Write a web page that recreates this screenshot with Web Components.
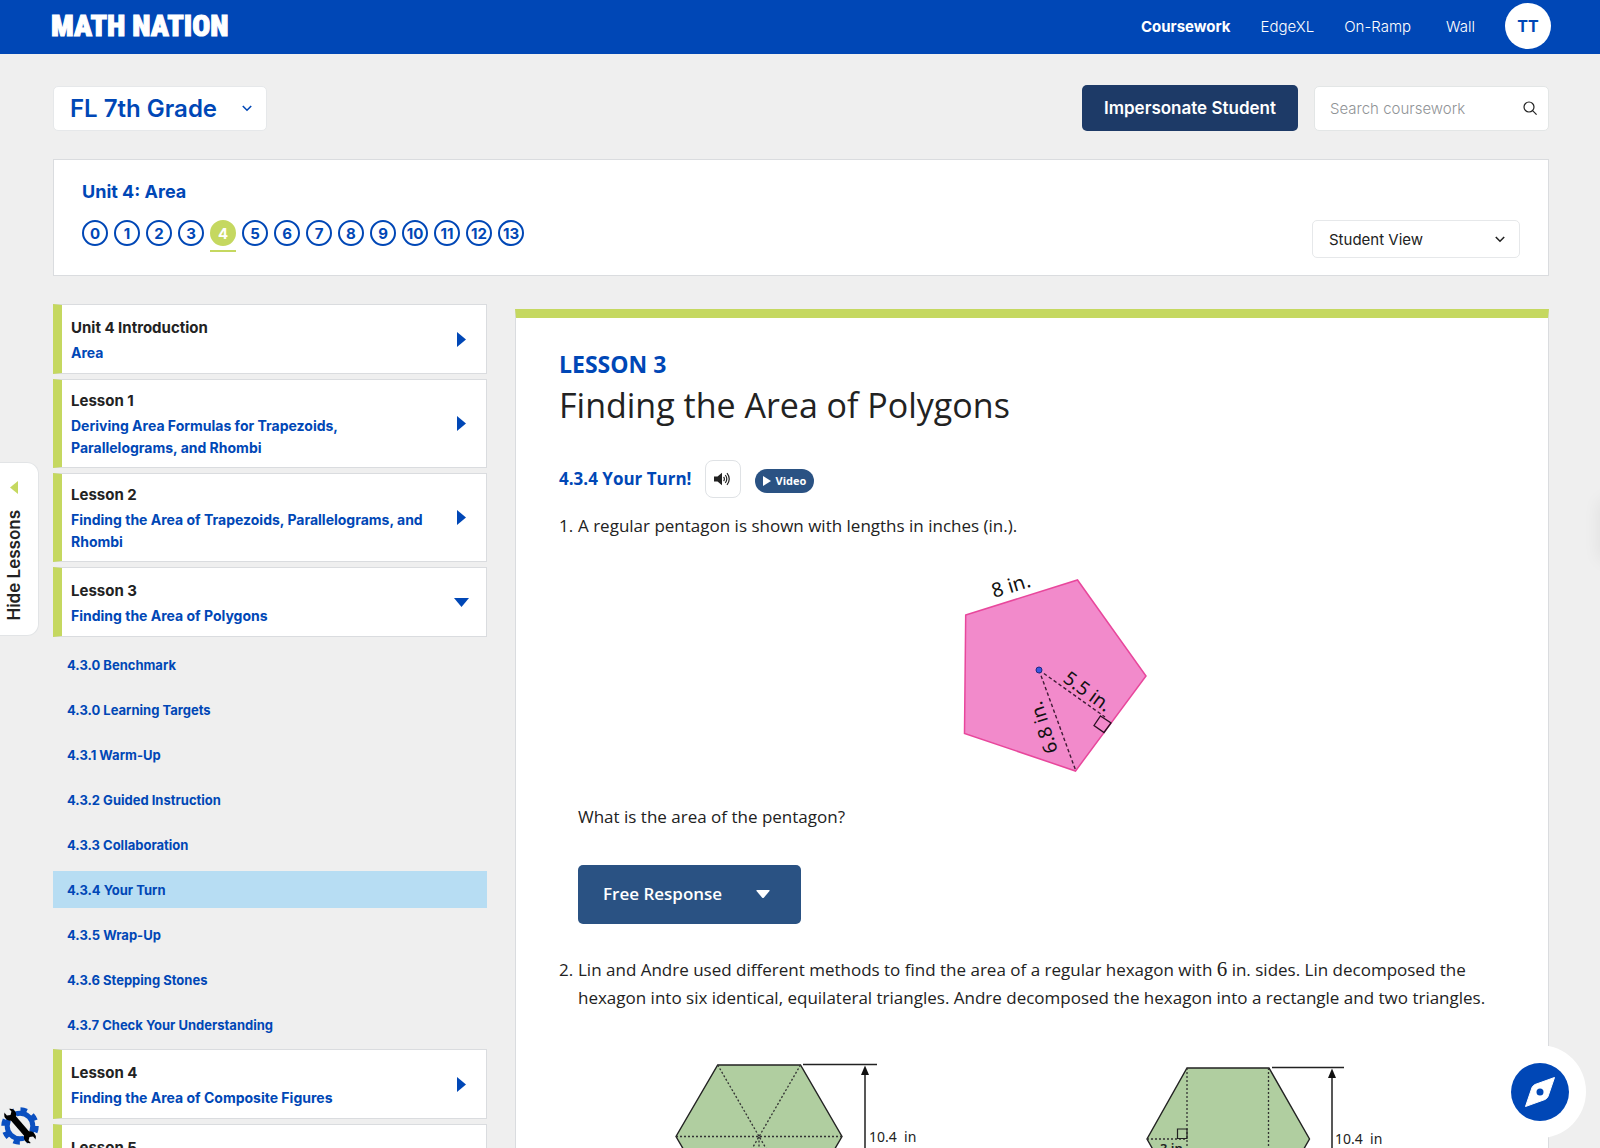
<!DOCTYPE html>
<html lang="en">
<head>
<meta charset="utf-8">
<title>Math Nation – Coursework</title>
<style>
  html, body { margin: 0; height: 100%; }
  body {
    --blue: #0047b6; --lime: #c5d860; --steel: #2a5283; --line: #dadcdf;
    background: #efefef; color: #222; overflow: hidden;
    font-family: Inter, "Liberation Sans", sans-serif; font-size: 15px;
  }
</style>
</head>
<body>
<math-app></math-app>

<script>
const define = (name, html, hook) => {
  const t = document.createElement('template');
  t.innerHTML = `<style>*{box-sizing:border-box}h1,h2,h3,p,ol,ul{margin:0;padding:0;font-weight:inherit;font-size:inherit}button,input,select{font:inherit;color:inherit;margin:0}a{color:inherit;text-decoration:none}svg{display:block}</style>${html}`;
  customElements.define(name, class extends HTMLElement {
    constructor() {
      super();
      this.attachShadow({ mode: 'open' }).append(t.content.cloneNode(true));
    }
    connectedCallback() { if (hook) hook(this, this.shadowRoot); }
  });
};

define('top-bar', `
<style>
  :host { display: flex; align-items: center; justify-content: space-between; height: 54px; padding: 0 49px 2px 51px; background: var(--blue); color: #fff; }
  .logo { font: 900 30px/52px "Roboto Condensed", "Open Sans Condensed", "Noto Sans Condensed", Roboto, sans-serif; -webkit-text-stroke: 1px #fff; }
  nav { display: flex; align-items: center; gap: 30px; font-size: 15px; font-weight: 300; }
  nav a[aria-current] { font-weight: 700; }
  .wall { padding-left: 5px; }
  button { width: 46px; height: 46px; border: 0; border-radius: 50%; background: #fff; color: var(--blue); font-size: 16px; font-weight: 700; padding: 0; }
</style>
<a class="logo" href="#">MATH NATION</a>
<nav aria-label="Main">
  <a href="#" aria-current="page">Coursework</a><a href="#">EdgeXL</a><a href="#">On-Ramp</a><a href="#" class="wall">Wall</a>
  <button type="button">TT</button>
</nav>`);

define('drop-down', `
<style>
  :host { display: flex; align-items: center; position: relative; background: #fff; border: 1px solid #e6e8ea; border-radius: 5px; }
  select { appearance: none; border: 0; background: none; width: 100%; height: 100%; padding: 0 40px 0 16px; outline: 0; border-radius: inherit; }
  svg { position: absolute; right: 14px; pointer-events: none; }
</style>
<select></select>
<svg width="10" height="7" viewBox="0 0 10 7" fill="none" stroke="currentColor" stroke-width="1.6"><path d="M.8 1 5 5.2 9.2 1"/></svg>`,
(host, root) => {
  const s = root.querySelector('select');
  s.setAttribute('aria-label', host.getAttribute('label'));
  s.add(new Option(host.getAttribute('value')));
});

define('search-box', `
<style>
  :host { display: flex; align-items: center; background: #fff; border: 1px solid #e3e6e6; border-radius: 5px; padding: 0 11px 0 15px; color: #222; }
  input { flex: 1; min-width: 0; border: 0; outline: 0; background: none; font-size: 15px; font-weight: 300; padding: 0; }
  input::placeholder { color: #909396; opacity: 1; }
</style>
<input type="search" placeholder="Search coursework" aria-label="Search coursework">
<svg width="14" height="14" viewBox="0 0 14 14" fill="none" stroke="currentColor" stroke-width="1.2"><circle cx="6" cy="6" r="5"/><path d="m9.6 9.6 4 4"/></svg>`);

define('tool-row', `
<style>
  :host { display: flex; align-items: center; gap: 16px; height: 46px; }
  drop-down { width: 214px; height: 45px; color: var(--blue); font-size: 24px; font-weight: 600; }
  button { margin-left: auto; height: 46px; width: 216px; border: 0; border-radius: 5px; background: #1d3a67; color: #fff; font-size: 17px; font-weight: 600; padding: 0; }
  search-box { width: 235px; height: 45px; }
</style>
<drop-down label="Course" value="FL 7th Grade"></drop-down>
<button type="button">Impersonate Student</button>
<search-box></search-box>`);

define('unit-panel', `
<style>
  :host { display: flex; justify-content: space-between; background: #fff; border: 1px solid var(--line); padding: 20px 28px 17px; height: 117px; }
  h2 { color: var(--blue); font-weight: 700; font-size: 18px; line-height: 24px; }
  ol { display: flex; gap: 6px; list-style: none; margin-top: 16px; }
  a { display: flex; align-items: center; justify-content: center; width: 26px; height: 26px; border: 2px solid var(--blue); border-radius: 50%; color: var(--blue); font-size: 15px; font-weight: 700; }
  li.on { border-bottom: 2px solid var(--lime); padding-bottom: 4px; }
  li.on a { background: var(--lime); border-color: var(--lime); color: #fff; }
  drop-down { align-self: flex-end; width: 208px; height: 38px; font-size: 15px; }
</style>
<div><h2>Unit 4: Area</h2><ol></ol></div>
<drop-down label="View" value="Student View"></drop-down>`,
(host, root) => {
  root.querySelector('ol').innerHTML = Array.from({ length: 14 }, (_, i) =>
    `<li${i === 4 ? ' class="on"' : ''}><a href="#">${i}</a></li>`).join('');
});

define('lesson-card', `
<style>
  :host { display: block; }
  button { display: flex; align-items: center; width: 100%; min-height: 70px; padding: 10px 17px 8px 9px; text-align: left; background: #fff; border: 1px solid var(--line); border-left: 9px solid var(--lime); }
  .text { flex: 1; display: flex; flex-direction: column; gap: 3px; font-weight: 700; font-size: 15px; line-height: 22px; padding-right: 24px; }
  .name { color: var(--blue); font-size: 14px; }
  svg { fill: var(--blue); width: 15px; margin-bottom: 2px; }
  .down, :host([open]) .right { display: none; }
  :host([open]) .down { display: block; }
</style>
<button type="button"><span class="text"><span><slot name="no"></slot></span><span class="name"><slot></slot></span></span>
<svg class="right" width="15" height="15" viewBox="0 0 15 15"><path d="M3 0v15l9-7.5z"/></svg>
<svg class="down" width="15" height="15" viewBox="0 0 15 15"><path d="M0 3h15L7.5 12z"/></svg></button>`);

define('step-links', `
<style>
  :host { display: flex; flex-direction: column; gap: 8px; margin: 4px 0 1px; }
  a { display: flex; align-items: center; height: 37px; padding: 0 14px; color: var(--blue); font-weight: 700; font-size: 13px; }
  a.on { background: #b7ddf3; }
</style>`,
(host, root) => {
  host.getAttribute('items').split('|').forEach(t => {
    const a = document.createElement('a');
    a.href = '#'; a.textContent = t;
    if (t === host.getAttribute('current')) a.className = 'on';
    root.append(a);
  });
});

define('lesson-list', `
<style>
  :host { display: flex; flex-direction: column; gap: 5px; }
</style>
<lesson-card><span slot="no">Unit 4 Introduction</span>Area</lesson-card>
<lesson-card><span slot="no">Lesson 1</span>Deriving Area Formulas for Trapezoids, Parallelograms, and Rhombi</lesson-card>
<lesson-card><span slot="no">Lesson 2</span>Finding the Area of Trapezoids, Parallelograms, and Rhombi</lesson-card>
<lesson-card open><span slot="no">Lesson 3</span>Finding the Area of Polygons</lesson-card>
<step-links current="4.3.4 Your Turn" items="4.3.0 Benchmark|4.3.0 Learning Targets|4.3.1 Warm-Up|4.3.2 Guided Instruction|4.3.3 Collaboration|4.3.4 Your Turn|4.3.5 Wrap-Up|4.3.6 Stepping Stones|4.3.7 Check Your Understanding"></step-links>
<lesson-card><span slot="no">Lesson 4</span>Finding the Area of Composite Figures</lesson-card>
<lesson-card><span slot="no">Lesson 5</span>&nbsp;</lesson-card>`);

define('pentagon-figure', `
<style>:host { display: block; } text { font: 19px "Noto Sans", "Open Sans", sans-serif; fill: #111; } .side { font-size: 20px; }</style>
<svg width="190" height="216" viewBox="960 560 190 216" role="img" aria-label="Regular pentagon">
  <path d="M965.7 615 1077.5 580 1146 676 1075.5 771 964.5 733.5z" fill="#f28acb" stroke="#e8479c" stroke-width="1.5"/>
  <path d="M1039 670 1105 717M1039 670 1075.5 770" fill="none" stroke="#401a35" stroke-width="1.4" stroke-dasharray="3.5 2.5"/>
  <path d="M1100.5 716 1111 723 1104 732.5 1094 725.5z" fill="none" stroke="#2a1022" stroke-width="1.3"/>
  <circle cx="1039" cy="670" r="3" fill="#3a55e0" stroke="#1c2a80"/>
  <text class="side" transform="translate(994 598) rotate(-17)">8 in.</text>
  <text transform="translate(1062 681) rotate(36)">5.5 in.</text>
  <text transform="translate(1058 751) rotate(-108)">6.8 in.</text>
</svg>`);

const heightMark = (x1, x2, ax, y) => `
  <path d="M${x1} ${y}H${x2}M${ax} ${y + 8}V1190" fill="none" stroke="#222" stroke-width="1.5"/>
  <path d="M${ax} ${y + 1}l4 9.5h-8z" fill="#111"/>`;

define('hexagon-figures', `
<style>:host { display: flex; justify-content: space-between; } text { font: 14px "Noto Sans", "Open Sans", sans-serif; fill: #222; } .base { font-size: 13px; font-weight: 600; }</style>
<svg width="245" height="150" viewBox="674 1060 245 150" role="img" aria-label="Hexagon in six triangles">
  <path d="M717.7 1065H800.5L842 1136.5 800.5 1208H717.7L676 1136.5z" fill="#b0cea0" stroke="#222" stroke-width="1.4"/>
  <path d="M717.7 1065 800.5 1208M800.5 1065 717.7 1208M676 1136.5H842M759 1136.5V1208" fill="none" stroke="#333" stroke-width="1.3" stroke-dasharray="2 2"/>
  ${heightMark(803, 877, 865, 1064.5)}
  <text x="869" y="1142">10.4&#160; in</text>
</svg>
<svg width="245" height="150" viewBox="1145 1060 245 150" role="img" aria-label="Hexagon in a rectangle and two triangles">
  <path d="M1187 1068H1269L1309.5 1139 1269 1210H1187L1147 1139z" fill="#b0cea0" stroke="#222" stroke-width="1.4"/>
  <path d="M1187 1068V1210M1268.5 1068V1210M1147 1139H1187" fill="none" stroke="#333" stroke-width="1.3" stroke-dasharray="2 2"/>
  <path d="M1177.5 1138.5V1129h9.5v9.5z" fill="none" stroke="#222" stroke-width="1.2"/>
  ${heightMark(1272, 1344, 1332, 1067.5)}
  <text x="1335" y="1144">10.4&#160; in</text>
  <text class="base" x="1160" y="1153">3 in</text>
</svg>`);

define('lesson-page', `
<style>
  :host { display: block; background: #fff; border: 1px solid var(--line); border-top: 9px solid var(--lime); padding: 28px 56px 0 43px; font-family: "Open Sans", "Noto Sans", sans-serif; font-size: 17px; line-height: 28px; }
  h1 { font-size: 34px; line-height: 46px; }
  h2 { color: var(--blue); font-size: 23px; font-weight: 700; line-height: 36px; }
  .turn { display: flex; align-items: center; margin-top: 32px; }
  h3 { color: var(--blue); font-size: 17px; font-weight: 700; margin-right: 13px; }
  .sound { display: grid; place-items: center; width: 36px; height: 38px; padding: 0; border: 1px solid #dfe2e5; border-radius: 8px; background: #fff; margin-right: 14px; }
  .video { display: flex; align-items: center; gap: 5px; height: 24px; margin-top: 4px; padding: 0 8px; border: 0; border-radius: 12px; background: var(--steel); color: #fff; font-size: 11px; font-weight: 700; }
  ol { list-style: none; margin-top: 14px; }
  li { display: grid; grid-template-columns: 19px 1fr; }
  li > div { display: flex; flex-direction: column; }
  pentagon-figure { margin: 20px 0 27px 382px; }
  .free { display: flex; align-items: center; justify-content: space-between; width: 223px; height: 59px; margin: 34px 0 32px; padding: 0 31px 2px 25px; border: 0; border-radius: 5px; background: var(--steel); color: #fff; font-weight: 600; font-size: 17px; }
  .math { font: 21px "Liberation Serif", serif; line-height: 20px; }
  hexagon-figures { margin: 48px 102px 0 96px; }
</style>
<h2>LESSON 3</h2>
<h1>Finding the Area of Polygons</h1>
<div class="turn">
  <h3>4.3.4 Your Turn!</h3>
  <button class="sound" type="button" aria-label="Read aloud"><svg width="17" height="14" viewBox="0 0 17 14" fill="none" stroke="#222" stroke-width="1.2"><path d="M0 4.5h3.5L8 .8v12.4L3.5 9.5H0z" fill="#222" stroke="none"/><path d="M9.6 4.800q1.600 2.200 0 4.400M11.300 3q3 4 0 8M13 1.200q4.500 5.800 0 11.600"/></svg></button>
  <button class="video" type="button"><svg width="8" height="10" viewBox="0 0 8 10" fill="#fff"><path d="M0 0v10l8-5z"/></svg>Video</button>
</div>
<ol>
  <li><span>1.</span><div>
    <p>A regular pentagon is shown with lengths in inches (in.).</p>
    <pentagon-figure></pentagon-figure>
    <p>What is the area of the pentagon?</p>
    <button class="free" type="button">Free Response<svg width="14" height="8" viewBox="0 0 14 8" fill="#fff"><path d="M1 0h12q1 .3.5 1L8 7.5q-1 1-2 0L.5 1Q0 .3 1 0z"/></svg></button>
  </div></li>
  <li><span>2.</span><div>
    <p>Lin and Andre used different methods to find the area of a regular hexagon with <span class="math">6</span> in. sides. Lin decomposed the hexagon into six identical, equilateral triangles. Andre decomposed the hexagon into a rectangle and two triangles.</p>
    <hexagon-figures></hexagon-figures>
  </div></li>
</ol>`);

define('hide-tab', `
<style>
  :host { position: absolute; left: 0; top: 462px; }
  button { display: flex; flex-direction: column; align-items: center; gap: 16px; width: 39px; height: 174px; padding: 18px 11px 0 0; background: #fff; border: 1px solid #e2e4e6; border-left: 0; border-radius: 0 12px 12px 0; font-size: 17px; font-weight: 600; }
  span { writing-mode: vertical-rl; transform: rotate(180deg); }
</style>
<button type="button"><svg width="8" height="13" viewBox="0 0 8 13" fill="var(--lime)"><path d="M8 0v13L0 6.5z"/></svg><span>Hide Lessons</span></button>`);

define('side-drawer', `
<style>:host { position: absolute; left: 100%; top: 500px; width: 20px; height: 60px; box-shadow: 0 0 18px rgba(0, 0, 0, .07); }</style>`);

define('gear-button', `
<style>
  :host { position: absolute; left: 0; bottom: 2px; }
  button { display: block; border: 0; background: none; padding: 0; }
</style>
<button type="button" aria-label="Settings"><svg width="40" height="40" viewBox="-20 -20 40 40">
  <circle r="12.8" fill="none" stroke="#0a4fc0" stroke-width="5"/>
  <circle r="16.5" fill="none" stroke="#0a4fc0" stroke-width="4.5" stroke-dasharray="6.5 6.46"/>
  <g transform="rotate(49)">
    <path d="M-13-3.4H13V3.4H-13z" stroke="#efefef" stroke-width="1.5"/>
    <circle cx="-15" r="6"/><circle cx="15" r="6"/>
    <path d="M-13-3.3H13V3.3H-13z"/>
    <path d="M-22.5-3H-16.5L-14.5 0-16.5 3H-22.5zM22.5-3H16.5L14.5 0 16.5 3H22.5z" fill="#efefef"/>
  </g>
</svg></button>`);

define('compass-button', `
<style>
  :host { position: absolute; right: 14px; bottom: 10px; }
  button { display: grid; place-items: center; width: 93px; height: 93px; border: 0; border-radius: 50%; background: #fff; padding: 0; }
</style>
<button type="button" aria-label="Navigator"><svg width="58" height="58" viewBox="-29 -29 58 58"><circle r="29" fill="#0047b6"/><path d="M14.5-14.5 8 4.5Q7 6.5 5 7.5L-14.5 14.5-8-4.5Q-7-6.5-5-7.5z" fill="#fff" stroke="#fff" stroke-linejoin="round"/><circle r="3.5" fill="#0047b6"/></svg></button>`);

define('math-app', `
<style>
  :host { display: block; position: relative; height: 100vh; overflow: hidden; }
  main { padding: 31px 51px 0 53px; }
  unit-panel { margin: 28px 0; }
  .cols { display: flex; gap: 28px; align-items: flex-start; }
  lesson-list { flex: 0 0 434px; }
  lesson-page { flex: 1; min-width: 0; margin-top: 5px; }
</style>
<top-bar></top-bar>
<main>
  <tool-row></tool-row>
  <unit-panel></unit-panel>
  <div class="cols"><lesson-list></lesson-list><lesson-page></lesson-page></div>
</main>
<hide-tab></hide-tab>
<side-drawer></side-drawer>
<gear-button></gear-button>
<compass-button></compass-button>`);
</script>
</body>
</html>
